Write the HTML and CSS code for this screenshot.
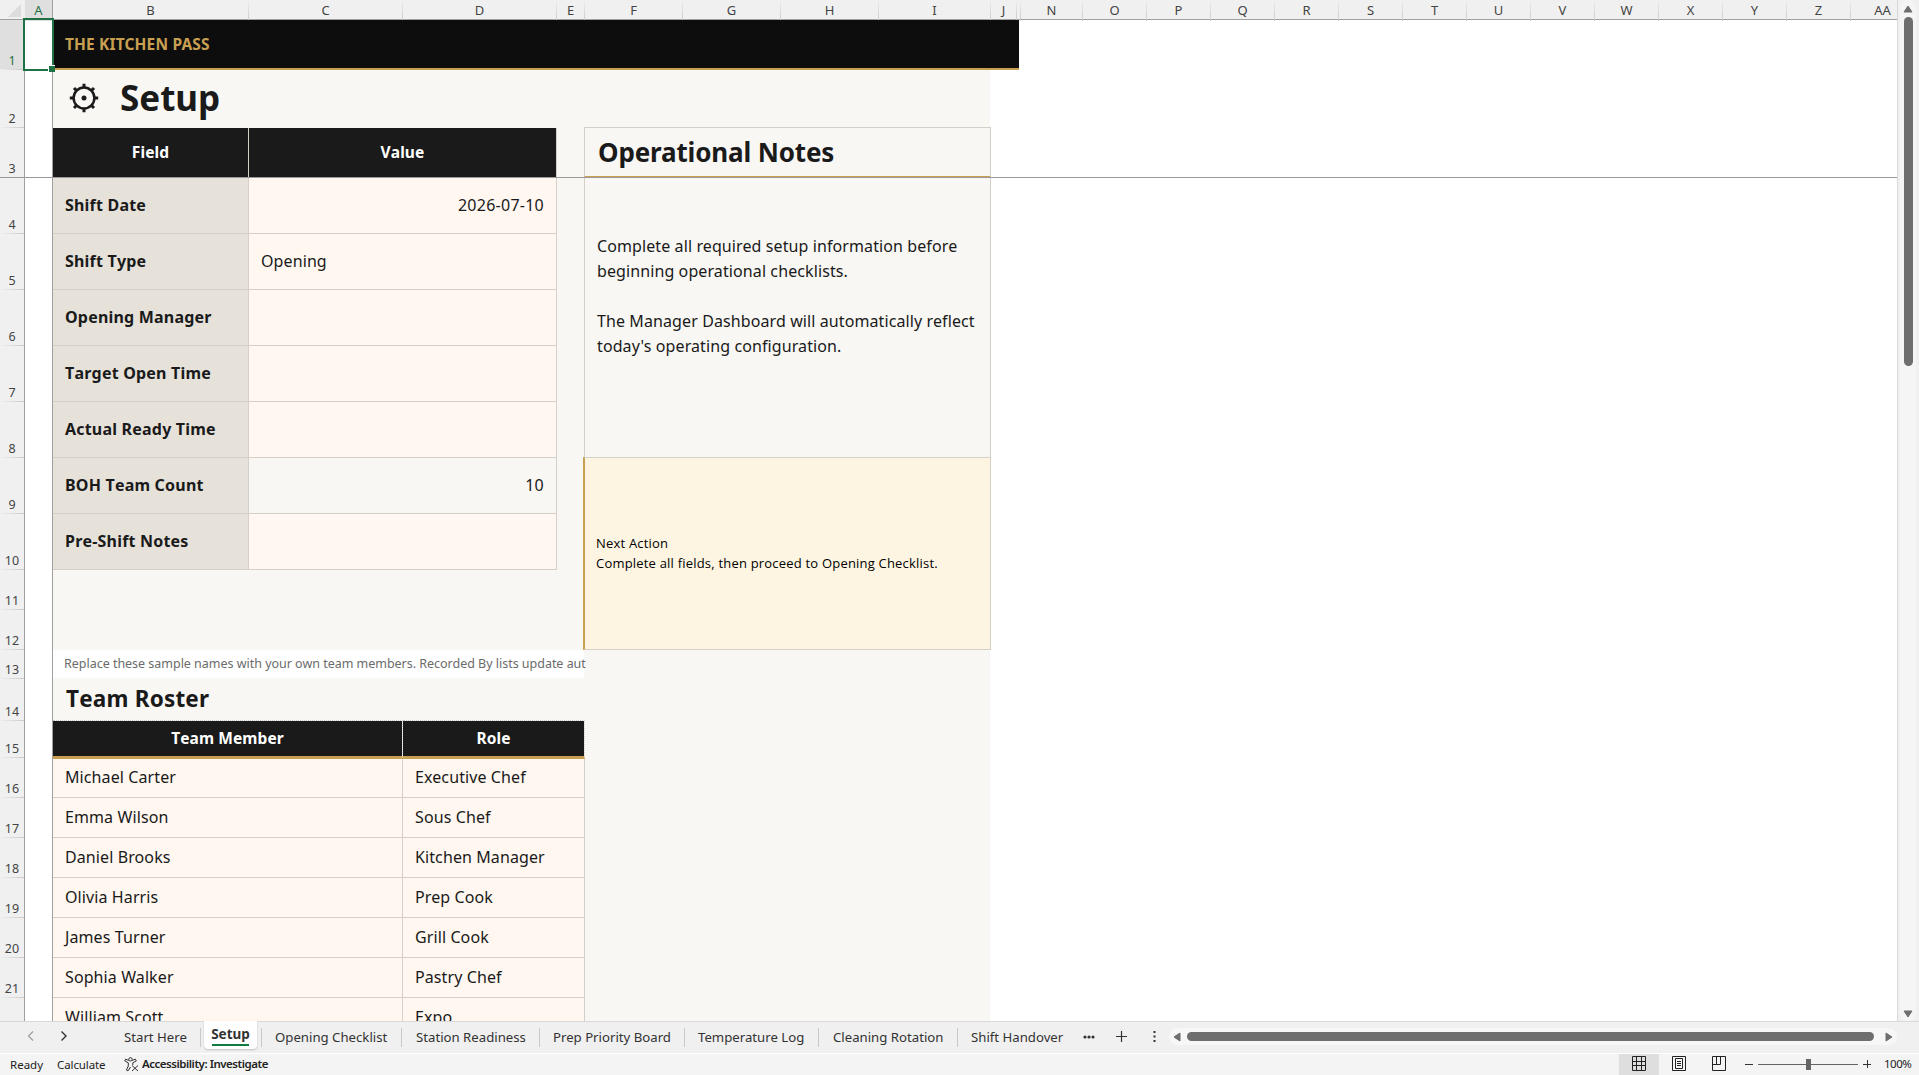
FILE: index.html
```html
<!DOCTYPE html>
<html lang="en">
<head>
  <meta charset="UTF-8" />
  <meta name="viewport" content="width=device-width, initial-scale=1.0"/>
  <title>The Kitchen Pass - Setup</title>
  <link rel="stylesheet" href="styles.css">
</head>
<body>

<div class="workbook">
  <div class="pane">
    <div class="sheet">
      <!-- column letters -->
      <div class="col-heads">
        <span class="corner"><svg width="13" height="13" viewBox="0 0 13 13"><path d="M13 0V13H0Z" fill="#dcdcdc"/></svg></span>
        <span class="active">A</span><span>B</span><span>C</span><span>D</span><span>E</span><span>F</span><span>G</span><span>H</span><span>I</span><span>J</span><span></span>
        <span>N</span><span>O</span><span>P</span><span>Q</span><span>R</span><span>S</span><span>T</span><span>U</span><span>V</span><span>W</span><span>X</span><span>Y</span><span>Z</span><span>AA</span>
      </div>

      <div class="sheet-body">
        <!-- row numbers -->
        <div class="row-heads">
          <span class="active">1</span><span>2</span><span>3</span><span>4</span><span>5</span><span>6</span><span>7</span><span>8</span><span>9</span><span>10</span><span>11</span><span>12</span><span>13</span><span>14</span><span>15</span><span>16</span><span>17</span><span>18</span><span>19</span><span>20</span><span>21</span><span></span>
        </div>

        <div class="cells">
          <div class="col-a"></div>
          <div class="page-fill"></div>
          <div class="banner">THE KITCHEN PASS</div>

          <div class="title">
            <svg class="gear" width="30" height="30" viewBox="0 0 30 30" fill="none" stroke="#1a1a1a">
              <circle cx="15" cy="15" r="10.4" stroke-width="2.5"/>
              <path d="M15 .8v4M15 25.2v4M.8 15h4M25.2 15h4M5 5l3 3M22 22l3 3M25 5l-3 3M8 22l-3 3" stroke-width="3"/>
              <circle cx="15" cy="15" r="2.5" fill="#1a1a1a" stroke="none"/>
            </svg>
            <span>Setup</span>
          </div>

          <div class="setup">
            <div class="th">Field</div><div class="th">Value</div>
            <div class="label">Shift Date</div><div class="value right">2026-07-10</div>
            <div class="label">Shift Type</div><div class="value">Opening</div>
            <div class="label">Opening Manager</div><div class="value"></div>
            <div class="label">Target Open Time</div><div class="value"></div>
            <div class="label">Actual Ready Time</div><div class="value"></div>
            <div class="label">BOH Team Count</div><div class="value right computed">10</div>
            <div class="label">Pre-Shift Notes</div><div class="value"></div>
          </div>

          <div class="notes">
            <h2>Operational Notes</h2>
            <div class="notes-text">
              <p>Complete all required setup information before<br>beginning operational checklists.</p>
              <p>The Manager Dashboard will automatically reflect<br>today's operating configuration.</p>
            </div>
            <div class="next-action">
              <p>Next Action</p>
              <p>Complete all fields, then proceed to Opening Checklist.</p>
            </div>
          </div>

          <div class="hint">Replace these sample names with your own team members. Recorded By lists update aut</div>
          <h3 class="roster-title">Team Roster</h3>

          <div class="roster">
            <div class="th">Team Member</div><div class="th">Role</div>
            <div>Michael Carter</div><div>Executive Chef</div>
            <div>Emma Wilson</div><div>Sous Chef</div>
            <div>Daniel Brooks</div><div>Kitchen Manager</div>
            <div>Olivia Harris</div><div>Prep Cook</div>
            <div>James Turner</div><div>Grill Cook</div>
            <div>Sophia Walker</div><div>Pastry Chef</div>
            <div>William Scott</div><div>Expo</div>
          </div>
        </div>

        <div class="freeze-line"></div>
        <div class="selection"></div>
      </div>
    </div>

    <div class="vscroll">
      <svg width="10" height="8" viewBox="0 0 10 8"><path d="M5 1L9 7H1Z" fill="#6e6e6e" stroke="#6e6e6e" stroke-linejoin="round"/></svg>
      <div class="vthumb"></div>
      <svg width="10" height="8" viewBox="0 0 10 8"><path d="M5 7L9 1H1Z" fill="#6e6e6e" stroke="#6e6e6e" stroke-linejoin="round"/></svg>
    </div>
  </div>

  <div class="tabbar">
    <div class="tab-nav">
      <svg width="8" height="12" viewBox="0 0 8 12"><path d="M6 1.5L1.5 6L6 10.5" fill="none" stroke="#a0a0a0" stroke-width="1.3"/></svg>
      <svg width="8" height="12" viewBox="0 0 8 12"><path d="M1.5 1.5L6 6L1.5 10.5" fill="none" stroke="#333" stroke-width="1.4"/></svg>
    </div>
    <div class="tabs">
      <span class="tab t-start">Start Here</span>
      <span class="tab t-setup"><b>Setup</b></span>
      <span class="tab t-opening">Opening Checklist</span>
      <span class="tab t-station">Station Readiness</span>
      <span class="tab t-prep">Prep Priority Board</span>
      <span class="tab t-temp">Temperature Log</span>
      <span class="tab t-clean">Cleaning Rotation</span>
      <span class="tab t-shift">Shift Handover</span>
    </div>
    <div class="tab-tools">
      <svg width="12" height="4" viewBox="0 0 12 4" fill="#333"><circle cx="2" cy="2" r="1.6"/><circle cx="6" cy="2" r="1.6"/><circle cx="10" cy="2" r="1.6"/></svg>
      <svg width="11" height="11" viewBox="0 0 11 11"><path d="M5.5 0V11M0 5.5H11" stroke="#333" stroke-width="1.2"/></svg>
      <svg width="3" height="11" viewBox="0 0 3 11" fill="#333"><path d="M.5 0h2v2h-2zM.5 4.5h2v2h-2zM.5 9h2v2h-2z"/></svg>
    </div>
    <div class="hscroll">
      <svg width="8" height="10" viewBox="0 0 8 10"><path d="M1 5L7 1V9Z" fill="#6e6e6e" stroke="#6e6e6e" stroke-linejoin="round"/></svg>
      <div class="hthumb"></div>
      <svg width="8" height="10" viewBox="0 0 8 10"><path d="M7 5L1 1V9Z" fill="#6e6e6e" stroke="#6e6e6e" stroke-linejoin="round"/></svg>
    </div>
  </div>

  <div class="statusbar">
    <span class="st-ready">Ready</span>
    <span class="st-calc">Calculate</span>
    <svg class="st-icon" width="15" height="15" viewBox="0 0 15 15" fill="none" stroke="#333" stroke-width="1">
      <circle cx="6.5" cy="2.3" r="1.7"/>
      <path d="M4.8 3.4L1.6 2.2L.7 3.9L4.3 5.8V9L2.4 13L4 13.9L6.5 10M8.2 3.4L11.4 2.2L12.3 3.9L8.8 5.8V8M8 8.5L14 14M14 8.5L8 14"/>
    </svg>
    <span class="st-access">Accessibility: Investigate</span>
    <div class="views">
      <span class="view on"><svg width="14" height="15" viewBox="0 0 14 15" fill="none" stroke="#222"><path d="M.5 .5h13v14H.5zM.5 5.5h13M.5 9.5h13M4.5 .5v14M9.5 .5v14"/></svg></span>
      <span class="view"><svg width="14" height="15" viewBox="0 0 14 15" fill="none" stroke="#222"><path d="M.5 .5h13v14H.5zM3.5 2.5h7v10h-7zM5 5.5h4M5 7.5h4M5 9.5h4"/></svg></span>
      <span class="view"><svg width="14" height="15" viewBox="0 0 14 15" fill="none" stroke="#222"><path d="M.5 .5h13v14H.5zM.5 8.5h8v-8M4.5 .5v8"/></svg></span>
    </div>
    <div class="zoom">
      <i class="minus"></i>
      <div class="slider"><i></i></div>
      <i class="plus"></i>
    </div>
    <span class="zoom-value">100%</span>
  </div>
</div>

</body>
</html>
```
FILE: styles.css
```css
* {
  box-sizing: border-box;
}

body {
  margin: 0;
  font-family: "Noto Sans", "Open Sans", sans-serif;
  color: #1a1a1a;
  background: #f0f0f0;
  overflow: hidden;
}

svg {
  display: block;
  flex: none;
}

p, h2, h3 {
  margin: 0;
}

.workbook {
  width: 1919px;
  height: 1075px;
  display: flex;
  flex-direction: column;
}

.pane {
  height: 1022px;
  display: flex;
  border-bottom: 1px solid #d9d9d9;
}

/* sheet */
.sheet {
  width: 1898px;
  background: #fff;
  border-right: 1px solid #d9d9d9;
  overflow: hidden;
}

.col-heads {
  display: grid;
  grid-template-columns: 25px 28px 196px 154px 154px 28px 98px 98px 98px 112px 26px 4px 62px repeat(12, 64px) 64px;
  height: 20px;
  background: #f0f0f0;
  border-bottom: 1px solid #a0a0a0;
  font-size: 13px;
  line-height: 21px;
  text-align: center;
  color: #444;
}

.col-heads span {
  border-right: 1px solid;
  border-image: linear-gradient(#f0f0f0, #c8c8c8) 1;
}

.col-heads .corner {
  padding: 4px 0 0 8px;
  border: none;
}

.col-heads .active {
  background: #dfdfdf;
  color: #1e7145;
  border-image: none;
  border-color: #a0a0a0;
}

.sheet-body {
  position: relative;
  display: flex;
  height: 1001px;
}

.row-heads,
.cells {
  display: grid;
  grid-template-rows: 50px 58px 50px repeat(7, 56px) 40px 40px 29px 42px 37px repeat(7, 40px);
}

.row-heads {
  width: 25px;
  background: #f0f0f0;
  border-right: 1px solid #a0a0a0;
  font-size: 12.5px;
  color: #444;
}

.row-heads span {
  display: flex;
  align-items: flex-end;
  justify-content: center;
  line-height: 16px;
  border-bottom: 1px solid;
  border-image: linear-gradient(to right, #f0f0f0, #c8c8c8) 1;
}

.row-heads .active {
  background: #dfdfdf;
  color: #1e7145;
}

.cells {
  grid-template-columns: 28px 196px 154px 154px 28px 98px 98px 98px 112px 28px;
  font-size: 16px;
  letter-spacing: 0.1px;
}

.col-a {
  grid-column: 1;
  grid-row: 1 / -1;
  border-right: 1px solid #a0a0a0;
}

.page-fill {
  grid-column: 2 / 10;
  grid-row: 2 / -1;
  margin-right: 1px;
  background: #f8f7f3;
}

.banner {
  grid-column: 2 / 11;
  grid-row: 1;
  padding-left: 12px;
  background: #0d0d0d;
  border-bottom: 2px solid #c9a052;
  color: #c9a052;
  font-size: 15.5px;
  font-weight: 700;
  letter-spacing: 0.15px;
  line-height: 48px;
}

.title {
  grid-column: 2 / 10;
  grid-row: 2;
  display: flex;
  align-items: center;
  gap: 21px;
  padding: 0 0 2px 16px;
  font-size: 35px;
  font-weight: 700;
  letter-spacing: 0;
}

.title span {
  margin-top: -2px;
}

.th {
  background: #1a1a1a;
  color: #fff;
  font-size: 15.5px;
  font-weight: 700;
  font-kerning: none;
  text-align: center;
}

/* setup form, B3:D10 */
.setup {
  grid-column: 2 / 5;
  grid-row: 3 / 11;
  display: grid;
  grid-template-columns: 196px 308px;
  grid-template-rows: 50px repeat(7, 56px);
}

.setup > div {
  border-right: 1px solid #d4d0c8;
  border-bottom: 1px solid #d4d0c8;
  line-height: 54px;
  padding: 0 12px;
}

.setup > .th {
  line-height: 49px;
}

.label {
  background: #e6e2da;
  font-weight: 700;
  font-kerning: none;
  letter-spacing: 0.2px;
}

.value {
  background: #fff7f0;
}

.value.right {
  text-align: right;
  letter-spacing: 0.25px;
}

.value.computed {
  background: #f8f7f3;
}

/* notes, F3:I12 */
.notes {
  grid-column: 6 / 10;
  grid-row: 3 / 13;
  display: flex;
  flex-direction: column;
  margin: -1px 0 0 -1px;
}

.notes h2 {
  height: 51px;
  padding-left: 13px;
  border: 1px solid #d4d0c8;
  border-bottom: 2px solid #c9a052;
  font-size: 26px;
  letter-spacing: -0.15px;
  line-height: 48px;
}

.notes-text {
  height: 279px;
  display: flex;
  flex-direction: column;
  justify-content: center;
  gap: 25px;
  padding: 0 0 43px 12px;
  border: 1px solid #d4d0c8;
  border-width: 0 1px;
  line-height: 25px;
}

.next-action {
  height: 193px;
  display: flex;
  flex-direction: column;
  justify-content: center;
  margin-left: -1px;
  padding: 0 0 2px 11px;
  background: #fdf5e2;
  border: 1px solid #d4d0c8;
  border-left: 2px solid #c9a052;
  color: #000;
  font-family: "Open Sans", sans-serif;
  font-size: 13px;
  letter-spacing: 0.2px;
  line-height: 20px;
}

.hint {
  grid-column: 2 / 6;
  grid-row: 13;
  margin: 0 1px 1px 0;
  padding-left: 11px;
  background: #fff;
  color: #6b6b6b;
  font-size: 12.5px;
  letter-spacing: -0.02px;
  line-height: 27px;
  white-space: nowrap;
}

.roster-title {
  grid-column: 2 / 6;
  grid-row: 14;
  padding-left: 13px;
  font-size: 22.5px;
  font-kerning: none;
  letter-spacing: 0.2px;
  line-height: 40px;
}

/* roster, B15:E22 */
.roster {
  grid-column: 2 / 6;
  grid-row: 15 / 23;
  display: grid;
  grid-template-columns: 350px 182px;
  grid-template-rows: 38px 39px repeat(6, 40px);
  margin-top: -1px;
  padding-top: 1px;
}

.roster > div {
  padding-left: 12px;
  background: #fff7f0;
  border-right: 1px solid #d4d0c8;
  border-bottom: 1px solid #d4d0c8;
  line-height: 38px;
}

.roster > .th {
  padding: 0;
  background: #1a1a1a;
  background-clip: padding-box;
  border-top: 1px dotted #c8c8c8;
  border-right: 1px dotted #d4d0c8;
  border-bottom: 3px solid #c9a052;
  margin-top: -1px;
  line-height: 34px;
}

.roster > .th + div:not(.th),
.roster > .th + div:not(.th) + div {
  line-height: 36px;
}

/* overlays on the grid */
.freeze-line {
  position: absolute;
  left: 0;
  right: 0;
  top: 157px;
  height: 1px;
  background: #999;
}

.selection {
  position: absolute;
  left: 23px;
  top: -2px;
  width: 31px;
  height: 53px;
  border: 2px solid #1e7145;
}

.selection::after {
  content: "";
  position: absolute;
  right: -3px;
  bottom: -3px;
  width: 6px;
  height: 6px;
  background: #1e7145;
  border: 1px solid #fff;
  border-width: 1px 0 0 1px;
}

/* scrollbars */
.vscroll {
  width: 16px;
  margin-left: 2px;
  padding: 5px 0 3px;
  display: flex;
  flex-direction: column;
  align-items: center;
  background: #f5f5f5;
  border-radius: 8px;
}

.vthumb {
  width: 9px;
  height: 349px;
  margin: 4px 0 auto;
  background: #6e6e6e;
  border-radius: 5px;
}

.tabbar {
  height: 32px;
  display: flex;
  background: #f0f0f0;
  border-bottom: 1px solid #fff;
  font-size: 13.2px;
  color: #333;
}

.tab-nav {
  width: 110px;
  display: flex;
  gap: 25px;
  padding: 8px 0 0 27px;
}

.tabs {
  display: flex;
}

.tab {
  position: relative;
  height: 19px;
  margin-top: 6px;
  padding-left: 13px;
  border-right: 1px solid #c8c8c8;
  line-height: 18px;
  white-space: nowrap;
}

.t-start { width: 91px; padding-left: 14px; }
.t-opening { width: 141px; border-left: 1px solid #c8c8c8; }
.t-station { width: 138px; padding-left: 14px; }
.t-prep { width: 145px; }
.t-temp { width: 134px; }
.t-clean { width: 139px; padding-left: 14px; }
.t-shift { width: 119px; border: none; }

.t-setup {
  width: 60px;
  height: 28px;
  margin-top: 0;
  padding: 0 0 0 3px;
  border: none;
}

.t-setup b {
  display: block;
  width: 53px;
  height: 28px;
  margin-top: -1px;
  background: #fff;
  border-radius: 0 0 4px 4px;
  box-shadow: 0 1px 2px rgba(0, 0, 0, 0.2);
  font-size: 13.5px;
  text-align: center;
  line-height: 26px;
}

.t-setup b::after {
  content: "";
  position: absolute;
  left: 11px;
  top: 22px;
  width: 37px;
  height: 2px;
  background: #107c41;
}

.tab-tools {
  width: 92px;
  display: flex;
  align-items: center;
  padding: 0 0 2px 6px;
}

.tab-tools svg:nth-child(2) {
  margin: 0 26px 0 21px;
}

.hscroll {
  width: 728px;
  height: 17px;
  margin-top: 6px;
  display: flex;
  align-items: center;
  justify-content: space-between;
  padding: 0 4px;
  background: #f7f7f7;
  border-radius: 9px;
}

.hthumb {
  width: 687px;
  height: 9px;
  margin-right: 6px;
  background: #6e6e6e;
  border-radius: 5px;
}

.statusbar {
  height: 21px;
  display: flex;
  background: #f4f4f4;
  font-size: 11.5px;
  line-height: 22px;
  color: #222;
  white-space: nowrap;
}

.st-ready {
  width: 57px;
  padding-left: 10px;
}

.st-calc {
  width: 67px;
  letter-spacing: -0.1px;
}

.st-icon {
  margin-top: 3px;
}

.st-access {
  margin-left: 3px;
  font-weight: 600;
  letter-spacing: -0.47px;
  line-height: 20px;
}

.views {
  display: flex;
  margin-left: auto;
}

.view {
  width: 40px;
  display: flex;
  align-items: center;
  justify-content: center;
  padding-bottom: 2px;
}

.view.on {
  background: #dedede;
}

.zoom {
  display: flex;
  align-items: center;
  padding-bottom: 1px;
  margin-left: 6px;
}

.minus,
.plus {
  width: 8px;
  height: 1px;
  background: #333;
}

.plus {
  height: 8px;
  background: linear-gradient(#333, #333) center / 8px 1px no-repeat, linear-gradient(#333, #333) center / 1px 8px no-repeat;
}

.slider {
  width: 100px;
  height: 1px;
  margin: 0 5px;
  display: flex;
  align-items: center;
  justify-content: center;
  background: #666;
}

.slider i {
  width: 5px;
  height: 11px;
  background: #666;
}

.zoom-value {
  width: 48px;
  padding-left: 13px;
  letter-spacing: -0.5px;
  line-height: 20px;
}
```
